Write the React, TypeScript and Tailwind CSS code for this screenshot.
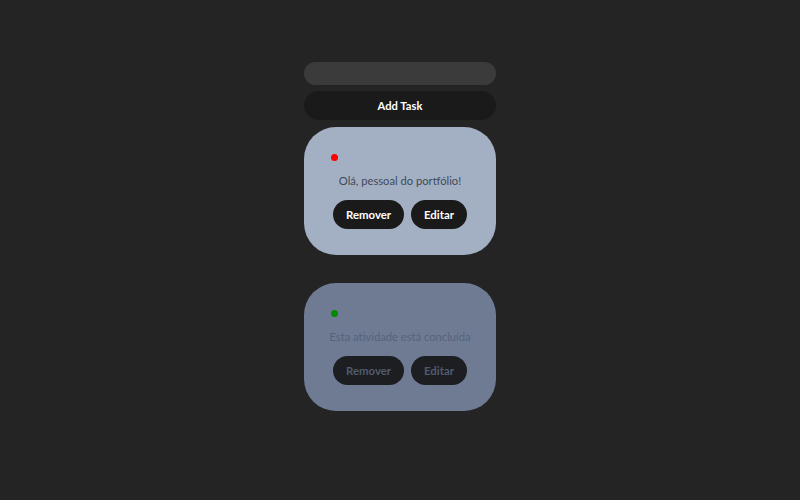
import React from "react";

type Task = { id: number; text: string; done: boolean };

const tasks: Task[] = [
  { id: 1, text: "Olá, pessoal do portfólio!", done: false },
  { id: 2, text: "Esta atividade está concluída", done: true },
];

const TaskCard: React.FC<{ task: Task }> = ({ task }) => (
  <div
    className={`w-[192px] h-[128px] rounded-[32px] px-[20px] pt-[27px] flex flex-col ${
      task.done ? "bg-[#6e7b93]" : "bg-[#a3b0c3]"
    }`}
  >
    <span
      className={`w-[7px] h-[7px] rounded-full ml-[7px] ${task.done ? "bg-[#008a00]" : "bg-[#ff0000]"}`}
    />
    <p
      className={`mt-[12px] text-center text-[11.2px] leading-[16px] whitespace-nowrap ${
        task.done ? "text-[#56637a]" : "text-[#3f4a5a]"
      }`}
    >
      {task.text}
    </p>
    <div className="mt-[11px] flex justify-center gap-[7px]">
      <button
        className={`h-[29px] w-[71px] pt-[1px] rounded-full text-[11.4px] font-bold ${
          task.done ? "text-[#505b6f] bg-[#1d1e21]" : "text-white bg-[#1a1a1a]"
        }`}
      >
        Remover
      </button>
      <button
        className={`h-[29px] w-[56px] pt-[1px] rounded-full text-[11.4px] font-bold ${
          task.done ? "text-[#505b6f] bg-[#1d1e21]" : "text-white bg-[#1a1a1a]"
        }`}
      >
        Editar
      </button>
    </div>
  </div>
);

export default function App() {
  return (
    <div
      className="min-h-screen w-full bg-[#242424] flex flex-col items-center pt-[62px]"
      style={{ fontFamily: 'Lato, "Open Sans", sans-serif' }}
    >
      <input
        className="w-[192px] h-[23px] rounded-full bg-[#3b3b3b] outline-none px-3 text-[12px] text-white"
        type="text"
      />
      <button className="mt-[6px] w-[192px] h-[29px] pt-[2px] rounded-full bg-[#1a1a1a] text-white text-[11.2px] font-bold">
        Add Task
      </button>
      <div className="mt-[7px] flex flex-col gap-[28px]">
        {tasks.map((t) => (
          <TaskCard key={t.id} task={t} />
        ))}
      </div>
    </div>
  );
}
